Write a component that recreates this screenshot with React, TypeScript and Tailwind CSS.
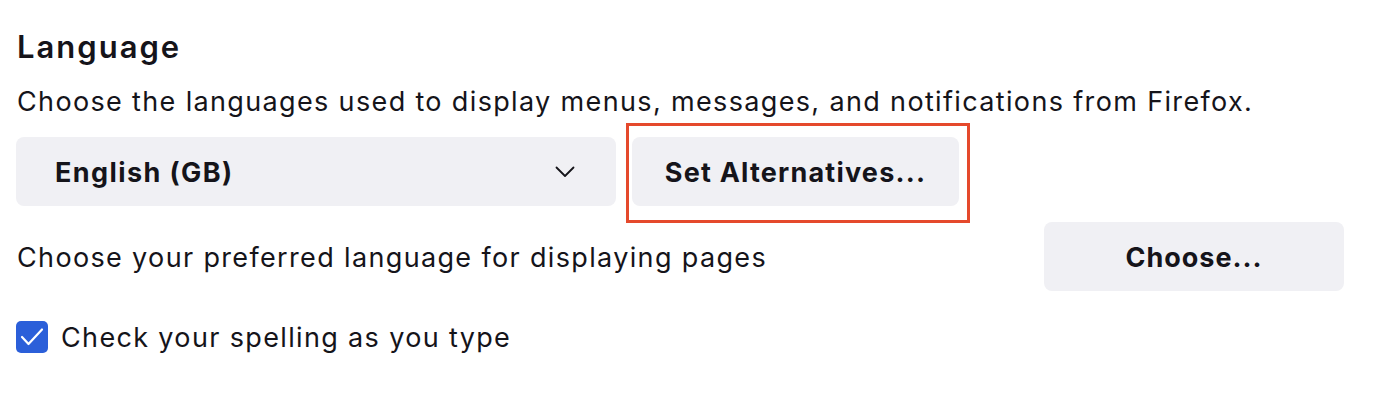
import React, { useState } from "react"

const ChevronDown = () => (
  <svg width="20" height="12" viewBox="0 0 20 12" fill="none">
    <path d="M1.5 1.5 L10 10 L18.5 1.5" stroke="#15141a" strokeWidth="1.8" strokeLinecap="round" strokeLinejoin="round" />
  </svg>
)

const App = () => {
  const [spellcheck, setSpellcheck] = useState(true)

  return (
    <div
      className="w-[1380px] h-[408px] bg-white text-[#15141a] pl-4 pr-9 pt-[26px]"
      style={{ fontFamily: "Inter, 'Noto Sans', sans-serif" }}
    >
      <h1 className="text-[31px] leading-[42px] font-semibold tracking-[2px] pl-px">Language</h1>

      <p className="text-[27px] leading-[36px] tracking-[1.35px] mt-[16px] pl-px">
        Choose the languages used to display menus, messages, and notifications from Firefox.
      </p>

      <div className="flex gap-4 mt-[17px]">
        <div className="w-[600px] h-[69px] rounded-lg bg-[#f0f0f4] flex items-center justify-between pl-[39px] pr-[41px]">
          <span className="text-[27px] font-bold tracking-[1.4px] pt-[4px]">English (GB)</span>
          <ChevronDown />
        </div>
        <div className="relative">
          <button className="h-[69px] w-[327px] rounded-lg bg-[#f0f0f4] text-[27px] font-bold tracking-[1.2px] pt-[4px]">
            Set Alternatives...
          </button>
          <div className="absolute -left-[6px] -right-[11px] -top-[14px] -bottom-[17px] border-[3px] border-[#e5492c] pointer-events-none" />
        </div>
      </div>

      <div className="flex items-center justify-between mt-4">
        <span className="text-[27px] tracking-[1.35px] pl-px pt-[4px]">Choose your preferred language for displaying pages</span>
        <button className="h-[69px] w-[300px] rounded-lg bg-[#f0f0f4] text-[27px] font-bold tracking-[1px] pt-[4px]">
          Choose...
        </button>
      </div>

      <label className="flex items-center gap-[13px] mt-[25px] cursor-pointer">
        <span
          onClick={() => setSpellcheck(!spellcheck)}
          className={`w-8 h-8 rounded-[5px] flex items-center justify-center ${
            spellcheck ? "bg-[#2b5fd9]" : "border-2 border-gray-500"
          }`}
        >
          {spellcheck && (
            <svg width="24" height="20" viewBox="0 0 24 20" fill="none">
              <path d="M2 10 L8.5 17 L22 2.5" stroke="white" strokeWidth="2.2" strokeLinecap="round" strokeLinejoin="round" />
            </svg>
          )}
        </span>
        <span className="text-[27px] tracking-[1.35px] pt-[2px]">Check your spelling as you type</span>
      </label>
    </div>
  )
}

export default App
